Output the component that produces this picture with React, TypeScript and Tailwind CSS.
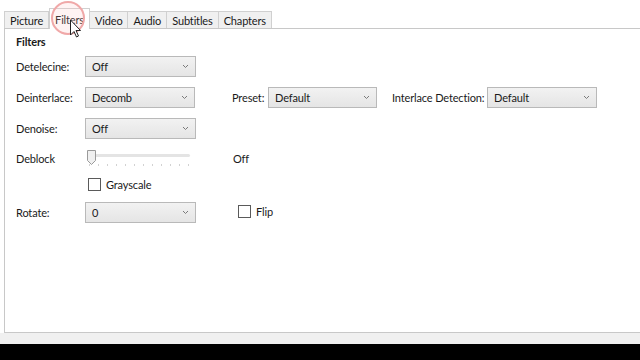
import React from "react";

function Chevron() {
  return (
    <svg width="7" height="5" viewBox="0 0 7 5" className="shrink-0">
      <path d="M1 1 L3.5 3.5 L6 1" fill="none" stroke="#7a7a7a" strokeWidth="1" />
    </svg>
  );
}

function Select({ value, w }: { value: string; w: string }) {
  return (
    <div
      className={`${w} h-[21px] flex items-center justify-between pl-[6px] pr-[6px] border border-[#b9b9b9] bg-gradient-to-b from-[#f2f2f2] to-[#e5e5e5] text-[#1a1a1a] shrink-0`}
    >
      <span>{value}</span>
      <Chevron />
    </div>
  );
}

function Tab({ label, active }: { label: string; active?: boolean }) {
  if (active) {
    return (
      <div className="h-[21px] -mb-px px-[5px] flex items-center bg-white border border-b-0 border-[#d0d0d0] text-[#1a1a1a] z-10">
        {label}
      </div>
    );
  }
  return (
    <div className="h-[17px] px-[5px] flex items-center bg-[#f0f0f0] border border-b-0 border-[#d0d0d0] -ml-px text-[#1a1a1a]">
      {label}
    </div>
  );
}

function Checkbox() {
  return <div className="w-[13px] h-[13px] border border-[#5a5a5a] bg-white shrink-0" />;
}

export default function App() {
  return (
    <div
      className="relative w-[640px] h-[360px] bg-white flex flex-col overflow-hidden text-[11px] tracking-[-0.15px] leading-none whitespace-nowrap"
      style={{ fontFamily: '"Segoe UI", Lato, "Open Sans", sans-serif' }}
    >
      <div className="h-[28px] flex items-end pl-[5px]">
        <Tab label="Picture" />
        <Tab label="Filters" active />
        <Tab label="Video" />
        <Tab label="Audio" />
        <Tab label="Subtitles" />
        <Tab label="Chapters" />
      </div>
      <div className="flex-1 ml-[4px] border-l border-t border-b border-[#c8c8c8] bg-white pl-[11px] pt-[6px] text-[#1a1a1a]">
        <div className="font-bold h-[12px] flex items-center">Filters</div>
        <div className="mt-[9px] flex items-center h-[21px]">
          <div className="w-[69px] shrink-0">Detelecine:</div>
          <Select value="Off" w="w-[111px]" />
        </div>
        <div className="mt-[10px] flex items-center h-[21px]">
          <div className="w-[69px] shrink-0">Deinterlace:</div>
          <Select value="Decomb" w="w-[110px]" />
          <div className="ml-[37px] w-[36px] shrink-0">Preset:</div>
          <Select value="Default" w="w-[109px]" />
          <div className="ml-[15px] w-[95px] shrink-0">Interlace Detection:</div>
          <Select value="Default" w="w-[110px]" />
        </div>
        <div className="mt-[10px] flex items-center h-[21px]">
          <div className="w-[69px] shrink-0">Denoise:</div>
          <Select value="Off" w="w-[111px]" />
        </div>
        <div className="mt-[9px] flex items-center h-[21px]">
          <div className="w-[70px] shrink-0">Deblock</div>
          <div className="relative w-[106px] h-[20px] shrink-0">
            <div className="absolute left-[2px] right-[2px] top-[5px] h-[3px] bg-[#e4e4e4] rounded-sm" />
            <div className="absolute left-[3px] right-[3px] top-[15px] flex justify-between">
              {Array.from({ length: 12 }).map((_, i) => (
                <div key={i} className="w-px h-[2px] bg-[#d2d2d2]" />
              ))}
            </div>
            <svg className="absolute left-0 top-0" width="11" height="17" viewBox="0 0 11 17">
              <path d="M1.5 1.5 H9.5 V11.5 L5.5 15.5 L1.5 11.5 Z" fill="#f0f0f0" stroke="#9a9a9a" />
            </svg>
          </div>
          <div className="ml-[41px]">Off</div>
        </div>
        <div className="mt-[5px] flex items-center h-[21px] pl-[72px]">
          <Checkbox />
          <div className="ml-[5px]">Grayscale</div>
        </div>
        <div className="mt-[7px] flex items-center h-[21px]">
          <div className="w-[69px] shrink-0">Rotate:</div>
          <Select value="0" w="w-[111px]" />
          <div className="ml-[42px] -mt-[2px] flex items-center">
            <Checkbox />
            <div className="ml-[5px]">Flip</div>
          </div>
        </div>
      </div>
      <div className="h-[11px] bg-[#f0f0f0]" />
      <div className="h-[16px] bg-black" />

      <svg className="absolute left-[48px] top-0 z-20" width="44" height="42" viewBox="0 0 44 42">
        <circle cx="20" cy="18" r="16" fill="rgba(255,190,190,0.18)" stroke="#f0a8a8" strokeWidth="2" />
        <path d="M22.5 20 L22.5 35 L26 31.5 L28.5 37 L30.5 36 L28 30.5 L32.5 30.5 Z" fill="white" stroke="#222" strokeWidth="1" strokeLinejoin="round" />
      </svg>
    </div>
  );
}
